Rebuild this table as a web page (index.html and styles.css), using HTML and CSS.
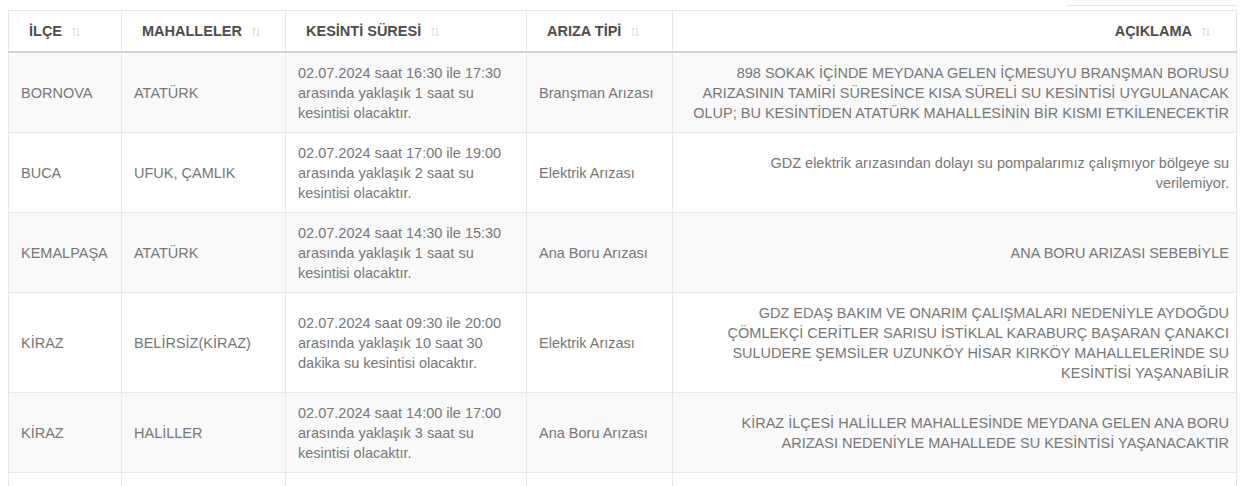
FILE: index.html
```html
<!DOCTYPE html>
<html lang="tr">
<head>
<meta charset="utf-8">
<title>Su Kesintileri</title>
<link rel="stylesheet" href="styles.css">
</head>
<body>
<div class="page">
  <div class="toolbar"><div class="search"></div></div>
  <table class="outages">
    <colgroup>
      <col class="c-ilce"><col class="c-mah"><col class="c-sure"><col class="c-tip"><col class="c-acik">
    </colgroup>
    <thead>
      <tr>
        <th>İLÇE<svg class="sort" viewBox="0 0 8 10"><path d="M2 9V1M0.5 2.5L2 1l1.5 1.5M6 1v8M4.5 7.5L6 9l1.5-1.5"/></svg></th>
        <th>MAHALLELER<svg class="sort" viewBox="0 0 8 10"><path d="M2 9V1M0.5 2.5L2 1l1.5 1.5M6 1v8M4.5 7.5L6 9l1.5-1.5"/></svg></th>
        <th>KESİNTİ SÜRESİ<svg class="sort" viewBox="0 0 8 10"><path d="M2 9V1M0.5 2.5L2 1l1.5 1.5M6 1v8M4.5 7.5L6 9l1.5-1.5"/></svg></th>
        <th>ARIZA TİPİ<svg class="sort" viewBox="0 0 8 10"><path d="M2 9V1M0.5 2.5L2 1l1.5 1.5M6 1v8M4.5 7.5L6 9l1.5-1.5"/></svg></th>
        <th class="right">AÇIKLAMA<svg class="sort" viewBox="0 0 8 10"><path d="M2 9V1M0.5 2.5L2 1l1.5 1.5M6 1v8M4.5 7.5L6 9l1.5-1.5"/></svg></th>
      </tr>
    </thead>
    <tbody>
      <tr>
        <td>BORNOVA</td>
        <td>ATATÜRK</td>
        <td>02.07.2024 saat 16:30 ile 17:30 arasında yaklaşık 1 saat su kesintisi olacaktır.</td>
        <td>Branşman Arızası</td>
        <td class="desc">898 SOKAK İÇİNDE MEYDANA GELEN İÇMESUYU BRANŞMAN BORUSU ARIZASININ TAMİRİ SÜRESİNCE KISA SÜRELİ SU KESİNTİSİ UYGULANACAK OLUP; BU KESİNTİDEN ATATÜRK MAHALLESİNİN BİR KISMI ETKİLENECEKTİR</td>
      </tr>
      <tr>
        <td>BUCA</td>
        <td>UFUK, ÇAMLIK</td>
        <td>02.07.2024 saat 17:00 ile 19:00 arasında yaklaşık 2 saat su kesintisi olacaktır.</td>
        <td>Elektrik Arızası</td>
        <td class="desc">GDZ elektrik arızasından dolayı su pompalarımız çalışmıyor bölgeye su<br>verilemiyor.</td>
      </tr>
      <tr>
        <td>KEMALPAŞA</td>
        <td>ATATÜRK</td>
        <td>02.07.2024 saat 14:30 ile 15:30 arasında yaklaşık 1 saat su kesintisi olacaktır.</td>
        <td>Ana Boru Arızası</td>
        <td class="desc">ANA BORU ARIZASI SEBEBİYLE</td>
      </tr>
      <tr>
        <td>KİRAZ</td>
        <td>BELİRSİZ(KİRAZ)</td>
        <td>02.07.2024 saat 09:30 ile 20:00 arasında yaklaşık 10 saat 30 dakika su kesintisi olacaktır.</td>
        <td>Elektrik Arızası</td>
        <td class="desc">GDZ EDAŞ BAKIM VE ONARIM ÇALIŞMALARI NEDENİYLE AYDOĞDU ÇÖMLEKÇİ CERİTLER SARISU İSTİKLAL KARABURÇ BAŞARAN ÇANAKCI SULUDERE ŞEMSİLER UZUNKÖY HİSAR KIRKÖY MAHALLELERİNDE SU KESİNTİSİ YAŞANABİLİR</td>
      </tr>
      <tr>
        <td>KİRAZ</td>
        <td>HALİLLER</td>
        <td>02.07.2024 saat 14:00 ile 17:00 arasında yaklaşık 3 saat su kesintisi olacaktır.</td>
        <td>Ana Boru Arızası</td>
        <td class="desc">KİRAZ İLÇESİ HALİLLER MAHALLESİNDE MEYDANA GELEN ANA BORU ARIZASI NEDENİYLE MAHALLEDE SU KESİNTİSİ YAŞANACAKTIR</td>
      </tr>
      <tr class="next">
        <td></td><td></td><td></td><td></td><td class="desc"></td>
      </tr>
    </tbody>
  </table>
</div>
</body>
</html>
```
FILE: styles.css
```css
html, body {
  margin: 0;
  padding: 0;
  background: #ffffff;
}
.page {
  padding: 0 8px;
  font-family: "Liberation Sans", Arial, sans-serif;
  font-size: 14.5px;
  color: #777777;
}
.toolbar {
  height: 10px;
  display: flex;
  justify-content: flex-end;
}
.search {
  width: 171px;
  height: 5px;
  border-bottom: 1px solid #e4e4e4;
}
.outages {
  width: 100%;
  border-collapse: collapse;
  table-layout: fixed;
  border: 1px solid #e6e6e6;
}
.c-ilce { width: 113px; }
.c-mah { width: 164px; }
.c-sure { width: 241px; }
.c-tip { width: 146px; }
.outages th {
  text-align: left;
  font-weight: 700;
  color: #4d4d4d;
  line-height: 18px;
  padding: 11px 20px 11px 20px;
  border-left: 1px solid #e8e8e8;
  border-bottom: 2px solid #d2d2d2;
  white-space: nowrap;
}
.outages th.right {
  text-align: right;
  padding-right: 26px;
}
.sort {
  width: 8px;
  height: 10px;
  margin-left: 10px;
  vertical-align: -1px;
  fill: none;
  stroke: #d6d6d6;
  stroke-width: 1;
}
.outages td {
  line-height: 20px;
  padding: 10px 12px 9px 12px;
  border-left: 1px solid #e8e8e8;
  border-bottom: 1px solid #e8e8e8;
  vertical-align: middle;
}
.outages td.desc {
  text-align: right;
  padding-left: 14px;
  padding-right: 7px;
}
.outages tbody tr:nth-child(odd) {
  background: #f9f9f9;
}
.outages tr.next td {
  height: 60px;
}
```
